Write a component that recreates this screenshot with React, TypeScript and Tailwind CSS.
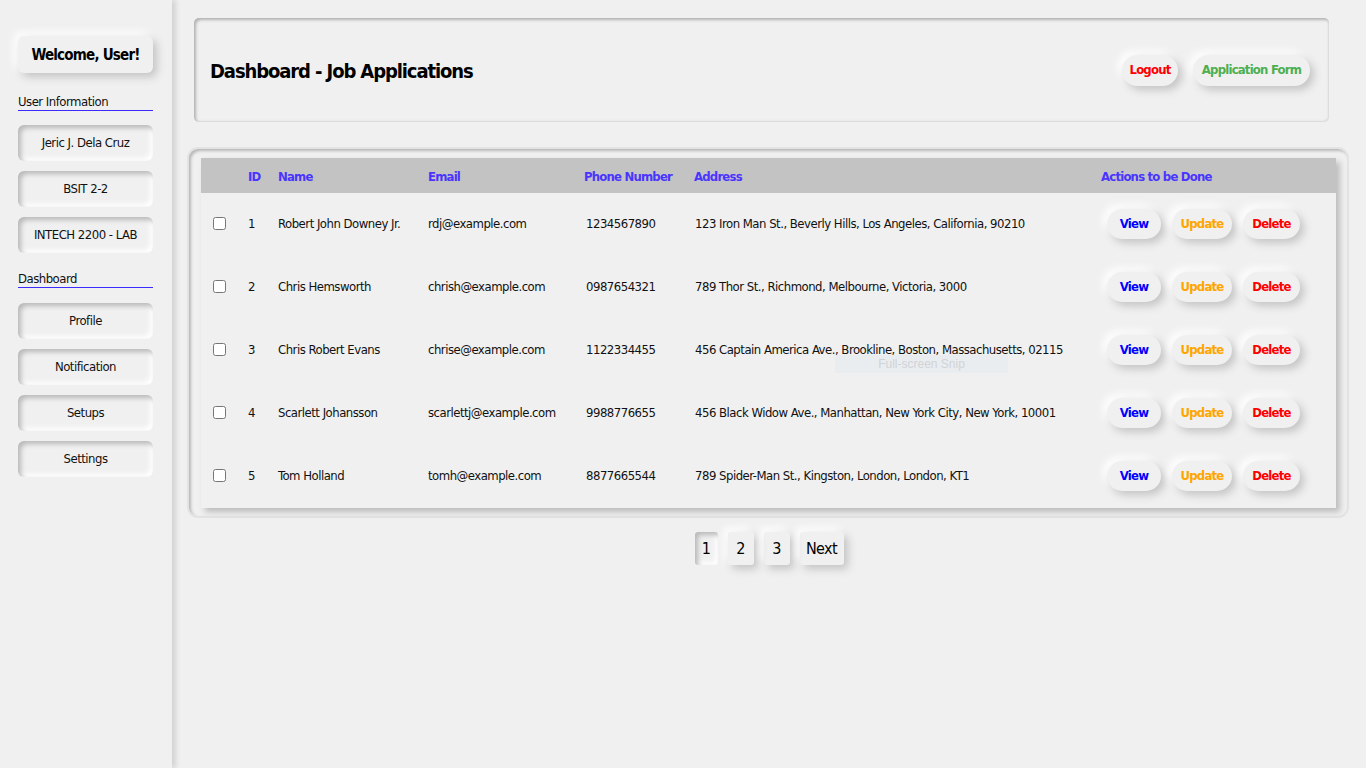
import React from "react";

type Applicant = {
  id: number;
  name: string;
  email: string;
  phone: string;
  address: string;
};

const applicants: Applicant[] = [
  { id: 1, name: "Robert John Downey Jr.", email: "rdj@example.com", phone: "1234567890", address: "123 Iron Man St., Beverly Hills, Los Angeles, California, 90210" },
  { id: 2, name: "Chris Hemsworth", email: "chrish@example.com", phone: "0987654321", address: "789 Thor St., Richmond, Melbourne, Victoria, 3000" },
  { id: 3, name: "Chris Robert Evans", email: "chrise@example.com", phone: "1122334455", address: "456 Captain America Ave., Brookline, Boston, Massachusetts, 02115" },
  { id: 4, name: "Scarlett Johansson", email: "scarlettj@example.com", phone: "9988776655", address: "456 Black Widow Ave., Manhattan, New York City, New York, 10001" },
  { id: 5, name: "Tom Holland", email: "tomh@example.com", phone: "8877665544", address: "789 Spider-Man St., Kingston, London, London, KT1" },
];

const raised = "shadow-[4px_4px_8px_#c4c4c4,-4px_-4px_8px_#ffffff]";
const inset = "shadow-[inset_3px_3px_5px_#b9b9b9,inset_-3px_-3px_5px_#ffffff]";
// condensed text tuned to the narrow face of the reference
const body = "text-[13px] tracking-[-0.5px]";
const bold = "text-[13px] font-bold tracking-[-0.8px]";

function SideItem({ label }: { label: string }) {
  return (
    <div className={`h-9 w-[135px] rounded-md flex items-center justify-center text-[#111] ${body} ${inset}`}>
      {label}
    </div>
  );
}

function SideLabel({ label }: { label: string }) {
  return (
    <div className={`w-[135px] border-b border-[#3b2bff] leading-[17px] text-[#111] ${body}`}>{label}</div>
  );
}

export default function App() {
  return (
    <div className="relative flex min-h-screen bg-[#f0f0f0] font-['Liberation_Sans_Narrow','DejaVu_Sans_Condensed',sans-serif] text-[#111]">
      {/* Sidebar */}
      <aside className="relative z-10 w-[172px] shrink-0 min-h-screen bg-[#f0f0f0] pl-[18px] pt-[36px] shadow-[4px_0_5px_rgba(0,0,0,0.12)]">
        <div className={`h-[37px] w-[135px] rounded-md flex items-center justify-center pt-[2px] font-bold text-[15px] tracking-[-0.8px] text-black ${raised}`}>
          Welcome, User!
        </div>
        <div className="mt-[20px]">
          <SideLabel label="User Information" />
        </div>
        <div className="mt-[14px] flex flex-col gap-[10px]">
          <SideItem label="Jeric J. Dela Cruz" />
          <SideItem label="BSIT 2-2" />
          <SideItem label="INTECH 2200 - LAB" />
        </div>
        <div className="mt-[17px]">
          <SideLabel label="Dashboard" />
        </div>
        <div className="mt-[15px] flex flex-col gap-[10px]">
          <SideItem label="Profile" />
          <SideItem label="Notification" />
          <SideItem label="Setups" />
          <SideItem label="Settings" />
        </div>
      </aside>

      {/* Main */}
      <main className="flex-1 pt-[18px]">
        <header className="ml-[22px] w-[1135px] h-[104px] rounded-[5px] flex items-center justify-between pl-[16px] pr-[19px] shadow-[inset_2px_2px_3px_#b3b3b3,inset_-1px_-1px_2px_#dadada]">
          <h1 className="font-bold text-[20px] tracking-[-1.1px] text-black pt-[2px]">Dashboard - Job Applications</h1>
          <div className="flex items-center gap-[15px]">
            <button className={`h-[31px] w-[56px] rounded-full text-[#ff0000] ${bold} ${raised}`}>Logout</button>
            <button className={`h-[31px] w-[117px] rounded-full text-[#4caf50] ${bold} ${raised}`}>Application Form</button>
          </div>
        </header>

        <section className="ml-[17px] mt-[27px] w-[1158px] rounded-[9px] pl-[12px] pr-[11px] pt-[9px] pb-[8px] shadow-[inset_2px_2px_3px_#b8b8b8,0_0_0_2px_#e3e3e3]">
          <table className="w-[1135px] table-fixed border-collapse shadow-[4px_4px_6px_#bcbcbc] text-left">
            <colgroup>
              <col className="w-[35px]" />
              <col className="w-[30px]" />
              <col className="w-[150px]" />
              <col className="w-[156px]" />
              <col className="w-[110px]" />
              <col className="w-[407px]" />
              <col className="w-[247px]" />
            </colgroup>
            <thead>
              <tr className={`bg-[#c3c3c3] h-[35px] text-[#4a35ff] whitespace-nowrap ${bold}`}>
                <th className="px-3 pt-[2px]"></th>
                <th className="px-3 pt-[2px]">ID</th>
                <th className="px-3 pt-[2px]">Name</th>
                <th className="px-3 pt-[2px]">Email</th>
                <th className="px-3 pt-[2px]">Phone Number</th>
                <th className="px-3 pt-[2px]">Address</th>
                <th className="px-3 pt-[2px]">Actions to be Done</th>
              </tr>
            </thead>
            <tbody className={`text-[#111] ${body}`}>
              {applicants.map((a) => (
                <tr key={a.id} className="h-[63px] whitespace-nowrap">
                  <td className="px-3 pb-[2px]">
                    <input type="checkbox" className="block w-[13px] h-[13px]" />
                  </td>
                  <td className="px-3 pb-[2px]">{a.id}</td>
                  <td className="px-3 pb-[2px]">{a.name}</td>
                  <td className="px-3 pb-[2px]">{a.email}</td>
                  <td className="px-3 pl-[14px] pb-[2px]">{a.phone}</td>
                  <td className="px-3 pl-[13px] pb-[2px]">{a.address}</td>
                  <td className="px-3 pb-[2px]">
                    <div className="flex items-center gap-[11px] pl-[6px]">
                      <button className={`h-[30px] w-[54px] rounded-full text-[#0000ff] ${bold} ${raised}`}>View</button>
                      <button className={`h-[30px] w-[60px] rounded-full text-[#ffa500] ${bold} ${raised}`}>Update</button>
                      <button className={`h-[30px] w-[57px] rounded-full text-[#ff0000] ${bold} ${raised}`}>Delete</button>
                    </div>
                  </td>
                </tr>
              ))}
            </tbody>
          </table>
        </section>

        <nav className="mt-[16px] flex justify-center items-center gap-[10px] text-[16px] tracking-[-0.6px] text-black">
          <button className={`h-[33px] w-[23px] rounded-[3px] ${inset}`}>1</button>
          <button className={`h-[33px] w-[26px] rounded-[3px] ${raised}`}>2</button>
          <button className={`h-[33px] w-[26px] rounded-[3px] ${raised}`}>3</button>
          <button className={`h-[33px] w-[44px] rounded-[3px] ${raised}`}>Next</button>
        </nav>
      </main>

      {/* screenshot tool hint */}
      <div className="pointer-events-none absolute left-[835px] top-[355px] w-[173px] h-[18px] bg-[#e7ebef]/70 flex items-center justify-center text-[12px] leading-none text-[#d0d3d6] font-['Liberation_Sans',sans-serif]">
        Full-screen Snip
      </div>
    </div>
  );
}
